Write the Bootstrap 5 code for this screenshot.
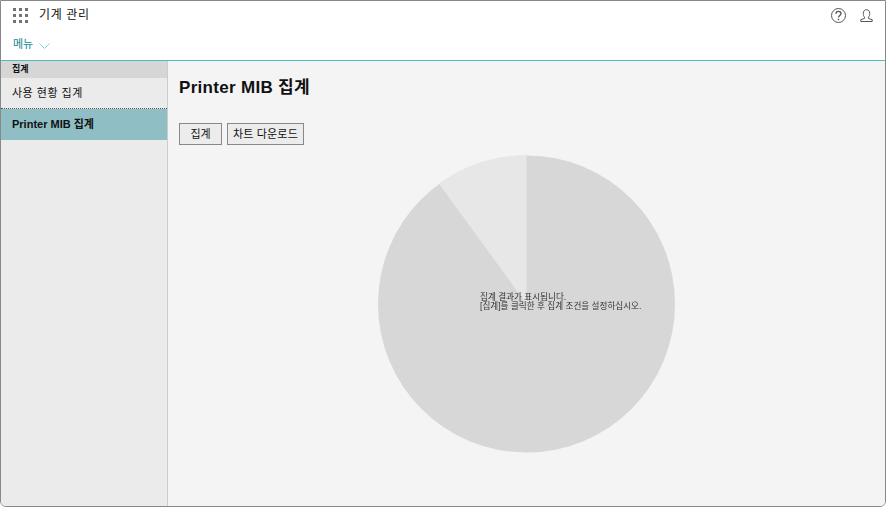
<!DOCTYPE html>
<html lang="ko">
<head>
  <meta charset="UTF-8" />
  <title>기계 관리</title>
  <link rel="stylesheet" href="https://cdn.jsdelivr.net/npm/bootstrap@5.3.0/dist/css/bootstrap.min.css" />
  <style>
    html, body { height: 100%; }
    body {
      font-family: "Liberation Sans", "Noto Sans CJK KR", sans-serif;
      font-size: 12px;
      color: #111;
      background: #fff;
      overflow: hidden;
    }
    .app-frame {
      height: 507px;
      border: 1px solid #888;
      border-radius: 0 0 6px 6px;
      overflow: hidden;
    }
    .top-head { height: 60px; border-bottom: 1px solid #4fbcc4; flex: none; }
    .title-row { height: 29px; padding: 0 12px 0 12px; }
    .app-title { font-size: 12px; margin-left: 11px; letter-spacing: .65px; margin-top: -1px; }
    .head-icons { gap: 14px; }
    .menu-row { height: 30px; padding-left: 12px; padding-bottom: 1px; color: #11858f; font-size: 11px; }
    .menu-row svg { margin-left: 6px; margin-top: 2px; }
    .side-col { width: 167px; flex: none; background: #ebebeb; border-right: 1px solid #ccc; }
    .side-head { height: 17px; background: #d6d6d6; font-size: 9px; font-weight: 700; padding: 2px 0 0 11px; line-height: 13px; }
    .side-item { padding-left: 11px; font-size: 11px; display: flex; align-items: center; }
    .side-first { border-bottom: 1px dotted #555; height: 31px; letter-spacing: .5px; }
    .side-active { height: 31px; background: #8fbfc4; font-weight: 700; padding-bottom: 1px; }
    .main-col { background: #f4f4f4; padding: 16px 11px; min-width: 0; }
    .page-title { font-size: 17px; font-weight: 700; margin: 0; line-height: 22px; letter-spacing: .3px; color: #111; }
    .tool-row { margin-top: 24px; gap: 5px; }
    .tool-btn {
      height: 22px;
      background: #ececec;
      border: 1px solid #888;
      font-size: 11px;
      line-height: 18px;
      padding: 0;
      color: #111;
    }
    .btn-sum { width: 43px; }
    .btn-down { width: 77px; letter-spacing: .15px; }
    .pie-wrap { position: relative; width: 298px; height: 298px; margin: 10px 0 0 198px; }
    .pie-note {
      position: absolute;
      left: 103px;
      top: 138px;
      font-size: 8.6px;
      line-height: 9px;
      color: #333;
      white-space: nowrap;
      filter: blur(.25px);
    }
  </style>
</head>
<body>
  <div class="app-frame d-flex flex-column">
    <!-- header -->
    <header class="top-head">
      <div class="title-row d-flex align-items-center">
        <svg width="15" height="15" viewBox="0 0 15 15" fill="#77716b">
          <rect x="0" y="0" width="3" height="3"/><rect x="6" y="0" width="3" height="3"/><rect x="12" y="0" width="3" height="3"/>
          <rect x="0" y="6" width="3" height="3"/><rect x="6" y="6" width="3" height="3"/><rect x="12" y="6" width="3" height="3"/>
          <rect x="0" y="12" width="3" height="3"/><rect x="6" y="12" width="3" height="3"/><rect x="12" y="12" width="3" height="3"/>
        </svg>
        <span class="app-title">기계 관리</span>
        <div class="head-icons ms-auto d-flex align-items-center">
          <svg width="15" height="15" viewBox="0 0 15 15" fill="none" stroke="#555" stroke-width="1">
            <circle cx="7.500" cy="7.500" r="7"/>
            <path d="M5 5.800c0-1.600 1.100-2.500 2.500-2.500S10 4.200 10 5.500c0 1.900-2.500 1.900-2.500 4" stroke-width="1.300"/>
            <path d="M7.500 10.700v1.600" stroke-width="1.400"/>
          </svg>
          <svg width="13" height="13" viewBox="0 0 13 13" fill="none" stroke="#555" stroke-width="1">
            <path d="M4.600 8.200C3.600 7.200 3.300 6 3.300 4.400 3.300 2 4.600.7 6.500.7s3.200 1.300 3.200 3.700c0 1.600-.3 2.800-1.300 3.800v1.200l3.800 1.300v1.800H.8v-1.800l3.800-1.300z"/>
          </svg>
        </div>
      </div>
      <div class="menu-row d-flex align-items-center">
        <span>메뉴</span>
        <svg width="11" height="6" viewBox="0 0 11 6" fill="none" stroke="#7fd3dc" stroke-width="1"><path d="M.5.500l5 5 5-5"/></svg>
      </div>
    </header>

    <div class="d-flex flex-grow-1" style="min-height:0">
      <!-- side menu -->
      <nav class="side-col">
        <div class="side-head">집계</div>
        <div class="side-item side-first">사용 현황 집계</div>
        <div class="side-item side-active">Printer MIB 집계</div>
      </nav>

      <!-- main -->
      <main class="main-col flex-grow-1">
        <h1 class="page-title">Printer MIB 집계</h1>
        <div class="tool-row d-flex">
          <button type="button" class="tool-btn btn-sum">집계</button>
          <button type="button" class="tool-btn btn-down">차트 다운로드</button>
        </div>
        <div class="pie-wrap">
          <svg width="298" height="298" viewBox="0 0 298 298">
            <circle cx="149.500" cy="149" r="148.500" fill="#d7d7d7"/>
            <path d="M149.500 149V.5A148.500 148.500 0 0 0 62.200 28.900z" fill="#e7e7e7"/>
          </svg>
          <div class="pie-note">집계 결과가 표시됩니다.<br />[집계]를 클릭한 후 집계 조건을 설정하십시오.</div>
        </div>
      </main>
    </div>
  </div>
  <script src="https://cdn.jsdelivr.net/npm/bootstrap@5.3.0/dist/js/bootstrap.bundle.min.js"></script>
</body>
</html>
